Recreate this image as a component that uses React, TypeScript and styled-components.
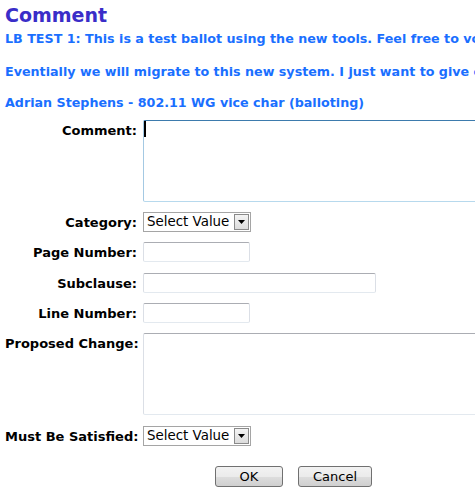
import React from "react";
import styled, { createGlobalStyle } from "styled-components";

const GlobalStyle = createGlobalStyle`
  html, body {
    margin: 0;
    padding: 0;
    background: #ffffff;
    overflow: hidden;
  }
  body {
    font-family: "DejaVu Sans", Verdana, sans-serif;
  }
`;

const Page = styled.div`
  box-sizing: border-box;
  width: 475px;
  height: 500px;
  overflow: hidden;
  padding: 4px 0 0 5px;
`;

const Title = styled.h1`
  margin: 0;
  font-size: 19px;
  line-height: 22px;
  font-weight: bold;
  color: #3a2dc8;
`;

const Note = styled.p<{ $top: number }>`
  margin: ${(p) => p.$top}px 0 0 0;
  font-size: 12.7px;
  line-height: 16px;
  font-weight: bold;
  color: #1a6fff;
  white-space: nowrap;
`;

const Form = styled.div`
  display: grid;
  grid-template-columns: 132px max-content;
  grid-template-rows: 82px 20px 21px 20px 20px 83px 20px auto;
  column-gap: 6px;
  row-gap: 10px;
  margin-top: 9px;
`;

const Label = styled.label`
  padding-top: 1px;
  font-size: 13px;
  line-height: 20px;
  font-weight: bold;
  color: #000000;
  text-align: right;
  white-space: nowrap;
`;

const AreaWrap = styled.div`
  position: relative;
  width: 400px;
`;

const TextArea = styled.div<{ $h: number; $focused?: boolean }>`
  box-sizing: border-box;
  width: 400px;
  height: ${(p) => p.$h}px;
  background: #ffffff;
  border-style: solid;
  border-width: 1px;
  border-radius: 2px;
  border-color: ${(p) =>
    p.$focused
      ? "#3d7bad #a4c9e3 #b7d9ed #a4c9e3"
      : "#abadb3 #dbdfe6 #e3e9ef #dbdfe6"};
`;

const Caret = styled.span`
  position: absolute;
  left: 1px;
  top: 1px;
  width: 2px;
  height: 16px;
  background: #000000;
`;

const TextInput = styled.div<{ $w: number }>`
  box-sizing: border-box;
  width: ${(p) => p.$w}px;
  height: 20px;
  background: #ffffff;
  border: 1px solid;
  border-radius: 2px;
  border-color: #abadb3 #dbdfe6 #e3e9ef #dbdfe6;
  justify-self: start;
`;

const SelectBox = styled.div`
  box-sizing: border-box;
  display: flex;
  align-items: center;
  justify-content: space-between;
  width: 108px;
  height: 20px;
  border: 1px solid #a5a5a5;
  background: #ffffff;
  padding: 0 1px 0 3px;
  justify-self: start;
`;

const SelectText = styled.span`
  font-family: "DejaVu Sans", Tahoma, sans-serif;
  font-size: 13.4px;
  line-height: 18px;
  color: #000000;
  white-space: nowrap;
`;

const ArrowButton = styled.span`
  box-sizing: border-box;
  display: flex;
  align-items: center;
  justify-content: center;
  width: 15px;
  height: 16px;
  border: 1px solid #8a8a8a;
  background: linear-gradient(#f4f4f4, #dcdcdc);
`;

const ButtonRow = styled.div`
  grid-column: 1 / -1;
  display: flex;
  gap: 15px;
  padding-left: 210px;
  margin-top: 10px;
`;

const Button = styled.button<{ $w: number }>`
  box-sizing: border-box;
  width: ${(p) => p.$w}px;
  height: 21px;
  padding: 0;
  border: 1px solid #707070;
  border-radius: 3px;
  background: linear-gradient(#f2f2f2 0%, #ebebeb 50%, #dddddd 51%, #cfcfcf 100%);
  font-family: "DejaVu Sans", Tahoma, sans-serif;
  font-size: 13px;
  color: #000000;
`;

const Arrow = () => (
  <svg width="7" height="4" viewBox="0 0 7 4">
    <path d="M0 0 H7 L3.5 4 Z" fill="#000" />
  </svg>
);

const Select = () => (
  <SelectBox>
    <SelectText>Select Value</SelectText>
    <ArrowButton>
      <Arrow />
    </ArrowButton>
  </SelectBox>
);

export default function App() {
  return (
    <>
      <GlobalStyle />
      <Page>
        <Title>Comment</Title>
        <Note $top={5}>
          LB TEST 1: This is a test ballot using the new tools. Feel free to vote on anything you like.
        </Note>
        <Note $top={17}>
          Eventially we will migrate to this new system. I just want to give everybody a chance to try it.
        </Note>
        <Note $top={15}>Adrian Stephens - 802.11 WG vice char (balloting)</Note>
        <Form>
          <Label>Comment:</Label>
          <AreaWrap>
            <TextArea $h={82} $focused />
            <Caret />
          </AreaWrap>

          <Label>Category:</Label>
          <Select />

          <Label>Page Number:</Label>
          <TextInput $w={107} />

          <Label>Subclause:</Label>
          <TextInput $w={233} />

          <Label>Line Number:</Label>
          <TextInput $w={107} />

          <Label>Proposed Change:</Label>
          <AreaWrap>
            <TextArea $h={82} />
          </AreaWrap>

          <Label>Must Be Satisfied:</Label>
          <Select />

          <ButtonRow>
            <Button $w={68}>OK</Button>
            <Button $w={74}>Cancel</Button>
          </ButtonRow>
        </Form>
      </Page>
    </>
  );
}
